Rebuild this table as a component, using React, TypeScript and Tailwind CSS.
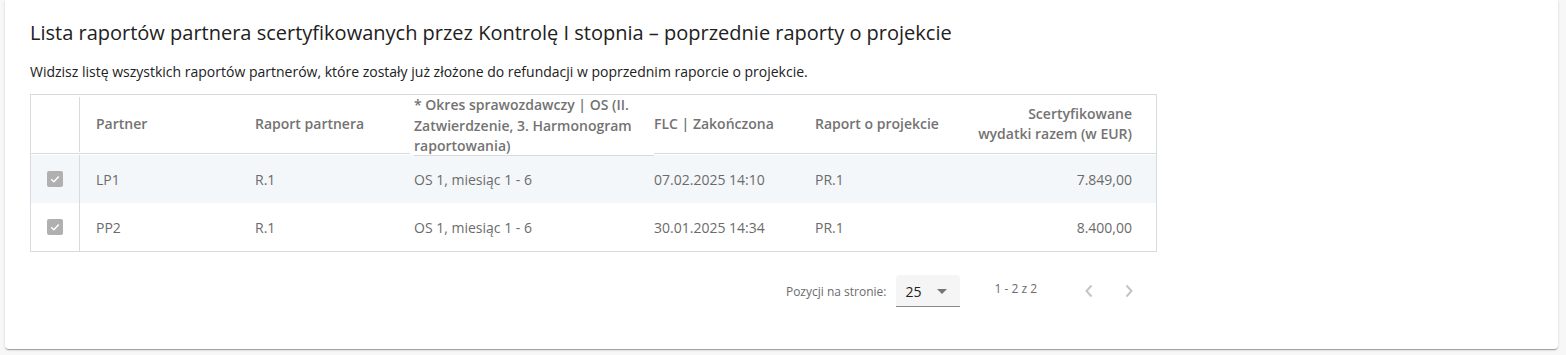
import React from "react";

const rows = [
    { partner: "LP1", report: "R.1", period: "OS 1, miesiąc 1 - 6", flc: "07.02.2025 14:10", project: "PR.1", total: "7.849,00" },
    { partner: "PP2", report: "R.1", period: "OS 1, miesiąc 1 - 6", flc: "30.01.2025 14:34", project: "PR.1", total: "8.400,00" },
];

const cols = "grid grid-cols-[49px_159px_159px_240px_161px_161px_1fr]";

function CheckedBox() {
    return (
        <div className="w-4 h-4 rounded-[2px] bg-[#b0b0b0] flex items-center justify-center">
            <svg width="12" height="12" viewBox="0 0 12 12" fill="none">
                <path d="M2.2 6.3 L4.8 8.8 L9.8 3.4" stroke="#ffffff" strokeWidth="1.5" />
            </svg>
        </div>
    );
}

export default function App() {
    return (
        <div className="min-h-[355px] w-full bg-[#f7f7f7] pl-[5px] pr-[8px] pb-[6px] font-['Open_Sans',sans-serif]">
            <div className="bg-white rounded-b-[4px] h-[349px] pl-[25px] pt-[19px] shadow-[0_2px_1px_-1px_rgba(0,0,0,0.2),0_1px_1px_0_rgba(0,0,0,0.14),0_1px_3px_0_rgba(0,0,0,0.12)]">
                <h2 className="text-[20px] leading-[28px] text-[#212121]">
                    Lista raportów partnera scertyfikowanych przez Kontrolę I stopnia – poprzednie raporty o projekcie
                </h2>
                <p className="mt-[15px] text-[14px] leading-[20px] text-[#212121]">
                    Widzisz listę wszystkich raportów partnerów, które zostały już złożone do refundacji w poprzednim raporcie o projekcie.
                </p>

                <div className="mt-[12px] w-[1127px] border border-[#d5dbdf]">
                    {/* header */}
                    <div className={`${cols} items-start text-[14px] leading-[20.5px] font-semibold text-[#737373]`}>
                        <div className="h-[59px] border-b border-[#d5dbdf] flex justify-end pt-[2px] pb-[1px]">
                            <div className="w-px h-full bg-[#d5dbdf]" />
                        </div>
                        <div className="h-[59px] border-b border-[#d5dbdf] pl-4 flex items-center">Partner</div>
                        <div className="h-[59px] border-b border-[#d5dbdf] pl-4 -mr-3 flex items-center">Raport partnera</div>
                        <div className="h-[61px] border-b border-[#d5dbdf] ml-4 -mr-4 whitespace-nowrap">
                            * Okres sprawozdawczy | OS (II.
                            <br />
                            Zatwierdzenie, 3. Harmonogram
                            <br />
                            raportowania)
                        </div>
                        <div className="h-[59px] border-b border-[#d5dbdf] ml-4 flex items-center">FLC | Zakończona</div>
                        <div className="h-[59px] border-b border-[#d5dbdf] pl-4 flex items-center">Raport o projekcie</div>
                        <div className="h-[59px] border-b border-[#d5dbdf] pr-6 flex items-center justify-end text-right">
                            <span>
                                Scertyfikowane
                                <br />
                                wydatki razem (w EUR)
                            </span>
                        </div>
                    </div>

                    {/* body */}
                    <div className="mt-[-1px]">
                        {rows.map((r, i) => (
                            <div
                                key={r.partner}
                                className={`${cols} h-12 items-center text-[14px] text-[#6b6b6b] ${i === 0 ? "bg-[#f4f7f9]" : "bg-white"}`}
                            >
                                <div className="h-full border-r border-[#d5dbdf] flex items-center justify-center">
                                    <CheckedBox />
                                </div>
                                <div className="pl-4">{r.partner}</div>
                                <div className="pl-4">{r.report}</div>
                                <div className="pl-4">{r.period}</div>
                                <div className="pl-4">{r.flc}</div>
                                <div className="pl-4">{r.project}</div>
                                <div className="pr-6 text-right">{r.total}</div>
                            </div>
                        ))}
                    </div>
                </div>

                {/* paginator */}
                <div className="w-[1127px] flex justify-end items-center pr-2 mt-[19px] text-[12px] text-[#6b6b6b]">
                    <span className="mr-[10px] mt-[2px]">Pozycji na stronie:</span>
                    <div className="w-16 h-8 bg-[#f5f5f5] rounded-t-[4px] border-b border-[#8a8a8a] flex items-center justify-between pl-[9px] pr-[13px]">
                        <span className="text-[14px] text-[#212121] mt-[2px]">25</span>
                        <svg width="10" height="5" viewBox="0 0 10 5" className="mt-[1px]">
                            <path d="M0 0 L10 0 L5 5 Z" fill="#757575" />
                        </svg>
                    </div>
                    <span className="ml-[34px] mr-8 -mt-[4px]">1 - 2 z 2</span>
                    <div className="w-10 h-10 flex items-center justify-center">
                        <svg width="10" height="14" viewBox="0 0 10 14" fill="none">
                            <path d="M7.5 1.5 L2.5 7 L7.5 12.5" stroke="#c4c4c4" strokeWidth="2" />
                        </svg>
                    </div>
                    <div className="w-10 h-10 flex items-center justify-center">
                        <svg width="10" height="14" viewBox="0 0 10 14" fill="none">
                            <path d="M2.5 1.5 L7.5 7 L2.5 12.5" stroke="#c4c4c4" strokeWidth="2" />
                        </svg>
                    </div>
                </div>
            </div>
        </div>
    );
}
